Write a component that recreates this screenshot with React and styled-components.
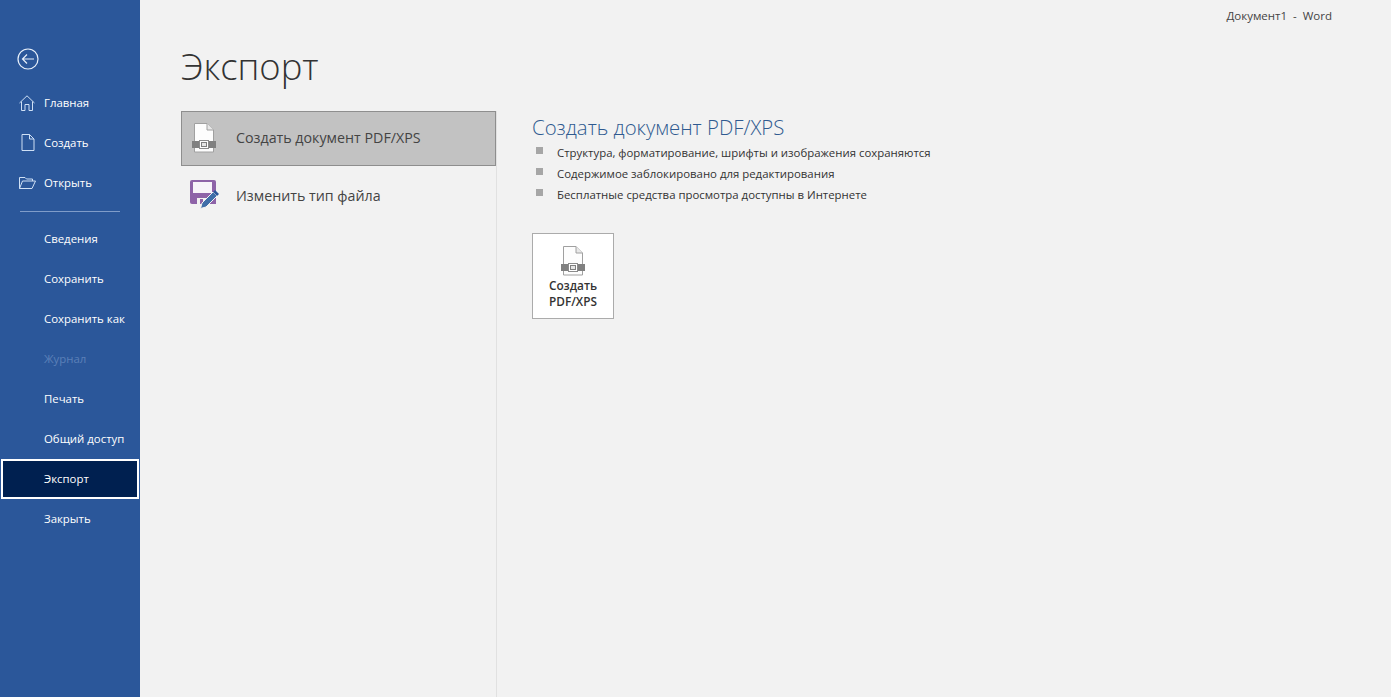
import styled, { createGlobalStyle } from "styled-components";

const GlobalStyle = createGlobalStyle`
  html, body {
    margin: 0;
    padding: 0;
    height: 100%;
    overflow: hidden;
    background: #f2f2f2;
    font-family: "Open Sans", "Noto Sans", sans-serif;
  }
`;

const mainItems = [
  { label: "Главная", icon: <HomeIcon /> },
  { label: "Создать", icon: <NewIcon /> },
  { label: "Открыть", icon: <OpenIcon /> },
];

const infoItems = [
  { label: "Сведения" },
  { label: "Сохранить" },
  { label: "Сохранить как" },
  { label: "Журнал", disabled: true },
  { label: "Печать" },
  { label: "Общий доступ" },
  { label: "Экспорт", active: true },
  { label: "Закрыть" },
];

const bullets = [
  "Структура, форматирование, шрифты и изображения сохраняются",
  "Содержимое заблокировано для редактирования",
  "Бесплатные средства просмотра доступны в Интернете",
];

function BackIcon() {
  return (
    <svg width="22" height="22" viewBox="0 0 22 22" fill="none" stroke="#e8f0fa" strokeWidth="1.2">
      <circle cx="11" cy="11" r="10" />
      <path d="M5.5 11H17M10 6.5L5.5 11L10 15.5" />
    </svg>
  );
}

function HomeIcon() {
  return (
    <svg width="17" height="16" viewBox="0 0 17 16" fill="none" stroke="#cfe0f5" strokeWidth="1">
      <path d="M0.5 8L8 0.8L15.5 8M2.5 6.5V15.5H6V9.5H10V15.5H13.5V6.5" />
    </svg>
  );
}

function NewIcon() {
  return (
    <svg width="14" height="17" viewBox="0 0 14 17" fill="none" stroke="#cfe0f5" strokeWidth="1">
      <path d="M1 0.5H8.5L13 5V16.5H1ZM8.5 0.5V5H13" />
    </svg>
  );
}

function OpenIcon() {
  return (
    <svg width="17" height="14" viewBox="0 0 17 14" fill="none" stroke="#cfe0f5" strokeWidth="1">
      <path d="M0.5 12.5V1.5H6L7.5 3H13.5V5M0.5 12.5L3.5 5H16.5L13 12.5Z" />
    </svg>
  );
}

function PdfIcon() {
  return (
    <svg width="24" height="30" viewBox="0 0 24 30">
      <path d="M2.5 0.5H15L21.5 7V29H2.5Z" fill="#fdfdfd" stroke="#a0a0a0" />
      <path d="M15 0.5V7H21.5" fill="#e8e8e8" stroke="#a0a0a0" />
      <rect x="0" y="18" width="7" height="7" fill="#808080" />
      <rect x="17" y="18" width="7" height="7" fill="#808080" />
      <rect x="7.5" y="17.5" width="9" height="8" fill="#fff" stroke="#8c8c8c" />
      <rect x="9.5" y="19.5" width="5" height="4" fill="#e6e6e6" stroke="#808080" />
    </svg>
  );
}

function SaveAsIcon() {
  return (
    <svg width="30" height="30" viewBox="0 0 30 30">
      <path d="M1 2Q1 0 3 0H25Q27 0 27 2V24H3Q1 24 1 22Z" fill="#8e63a8" />
      <rect x="4" y="2" width="19" height="11" fill="#f7f3f9" />
      <rect x="8" y="18" width="9" height="6" fill="#f2f2f2" />
      <rect x="11" y="19" width="3" height="5" fill="#8e63a8" />
      <path d="M13 23L24 12L28 16L17 27L11.5 28.5Z" fill="#3f6ea8" stroke="#f2f2f2" />
      <path d="M24 12L26 10L30 14L28 16Z" fill="#2b579a" />
    </svg>
  );
}

const App = () => {
  return (
    <Page>
      <GlobalStyle />
      <Sidebar>
        <BackButton>
          <BackIcon />
        </BackButton>
        <NavGroup>
          {mainItems.map((item) => (
            <NavItem key={item.label}>
              <NavIcon>{item.icon}</NavIcon>
              {item.label}
            </NavItem>
          ))}
        </NavGroup>
        <Divider />
        <NavGroup>
          {infoItems.map((item) => (
            <NavItem key={item.label} $active={item.active} $disabled={item.disabled}>
              {item.label}
            </NavItem>
          ))}
        </NavGroup>
      </Sidebar>
      <Main>
        <WindowTitle>Документ1&nbsp; -&nbsp; Word</WindowTitle>
        <Title>Экспорт</Title>
        <Columns>
          <Options>
            <Option $selected>
              <OptionIcon>
                <PdfIcon />
              </OptionIcon>
              Создать документ PDF/XPS
            </Option>
            <Option>
              <OptionIcon>
                <SaveAsIcon />
              </OptionIcon>
              Изменить тип файла
            </Option>
          </Options>
          <Details>
            <DetailsTitle>Создать документ PDF/XPS</DetailsTitle>
            <BulletList>
              {bullets.map((text) => (
                <Bullet key={text}>{text}</Bullet>
              ))}
            </BulletList>
            <CreateButton>
              <PdfIcon />
              <CreateLabel>
                Создать
                <br />
                PDF/XPS
              </CreateLabel>
            </CreateButton>
          </Details>
        </Columns>
      </Main>
    </Page>
  );
};

export default App;

const Page = styled.div`
  display: flex;
  width: 1391px;
  height: 697px;
  overflow: hidden;
  background: #f2f2f2;
`;

const Sidebar = styled.nav`
  width: 140px;
  flex-shrink: 0;
  background: #2b579a;
  display: flex;
  flex-direction: column;
`;

const BackButton = styled.div`
  height: 83px;
  padding: 48px 0 0 17px;
  box-sizing: border-box;
`;

const NavGroup = styled.div`
  display: flex;
  flex-direction: column;
`;

const NavItem = styled.div`
  height: 40px;
  margin: ${(p) => (p.$active ? "0 1px" : "0")};
  box-sizing: border-box;
  display: flex;
  align-items: center;
  padding-left: ${(p) => (p.$active ? "41px" : "44px")};
  padding-bottom: ${(p) => (p.$active ? "2px" : "1px")};
  position: relative;
  font-size: 11.4px;
  color: ${(p) => (p.$disabled ? "#5b80b8" : "#fff")};
  background: ${(p) => (p.$active ? "#002050" : "transparent")};
  border: ${(p) => (p.$active ? "2px solid #fff" : "none")};
`;

const NavIcon = styled.span`
  position: absolute;
  left: 19px;
  width: 17px;
  display: flex;
  justify-content: center;
`;

const Divider = styled.div`
  height: 1px;
  width: 100px;
  margin: 8px 0 7px 20px;
  background: #7f9cc9;
`;

const Main = styled.main`
  flex: 1;
  position: relative;
  display: flex;
  flex-direction: column;
  padding-left: 41px;
`;

const WindowTitle = styled.div`
  position: absolute;
  top: 8px;
  right: 59px;
  font-size: 11.5px;
  color: #444;
`;

const Title = styled.h1`
  margin: 0;
  padding-top: 40px;
  height: 71px;
  font-size: 36.4px;
  line-height: 52px;
  font-weight: 300;
  color: #333;
`;

const Columns = styled.div`
  flex: 1;
  display: flex;
`;

const Options = styled.div`
  width: 316px;
  box-sizing: border-box;
  border-right: 1px solid #e1e1e1;
  display: flex;
  flex-direction: column;
`;

const Option = styled.div`
  width: 315px;
  height: ${(p) => (p.$selected ? "55px" : "60px")};
  box-sizing: border-box;
  display: flex;
  align-items: center;
  padding-bottom: 2px;
  font-size: 14.25px;
  color: #444;
  background: ${(p) => (p.$selected ? "#c2c2c2" : "transparent")};
  border: ${(p) => (p.$selected ? "1px solid #8e8e8e" : "1px solid transparent")};
`;

const OptionIcon = styled.span`
  width: 54px;
  flex-shrink: 0;
  display: flex;
  justify-content: center;
  padding-right: 10px;
  box-sizing: border-box;
`;

const Details = styled.section`
  padding: 3px 0 0 35px;
`;

const DetailsTitle = styled.h2`
  margin: 0;
  font-size: 20.35px;
  line-height: 26px;
  font-weight: 300;
  color: #2f5a90;
`;

const BulletList = styled.ul`
  list-style: none;
  margin: 2px 0 0;
  padding: 0;
`;

const Bullet = styled.li`
  position: relative;
  height: 21px;
  line-height: 21px;
  padding-left: 25px;
  font-size: 11.4px;
  color: #333;
  &::before {
    content: "";
    position: absolute;
    left: 4px;
    top: 5px;
    width: 7px;
    height: 7px;
    background: #a6a6a6;
  }
`;

const CreateButton = styled.div`
  width: 82px;
  height: 86px;
  margin-top: 28px;
  box-sizing: border-box;
  background: #fff;
  border: 1px solid #ababab;
  display: flex;
  flex-direction: column;
  align-items: center;
  padding-top: 12px;
`;

const CreateLabel = styled.div`
  margin-top: 1px;
  font-size: 11.8px;
  line-height: 16px;
  font-weight: 600;
  color: #333;
  text-align: center;
`;
